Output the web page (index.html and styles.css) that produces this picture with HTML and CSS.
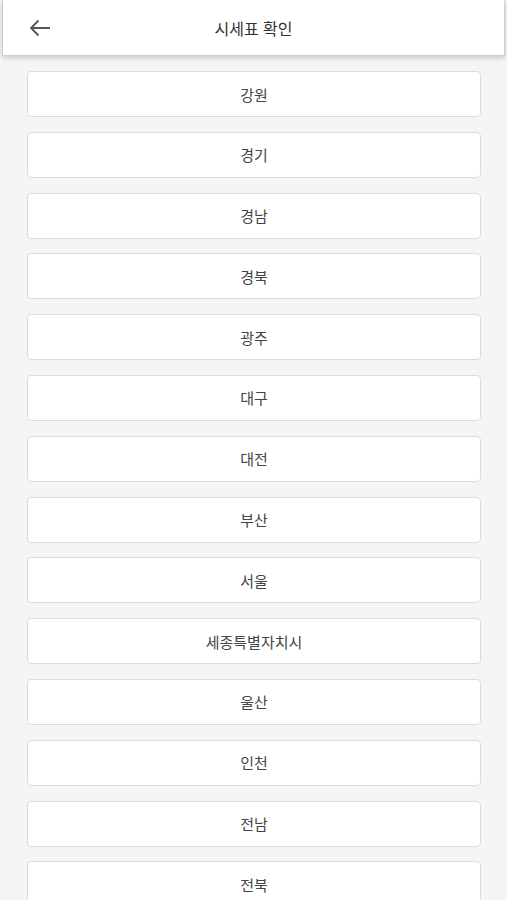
FILE: index.html
```html
<!DOCTYPE html>
<html lang="ko">
  <head>
    <meta charset="UTF-8" />
    <title>시세표 확인</title>
    <link rel="stylesheet" href="styles.css">
  </head>
  <body>
    <div class="header">
      <span class="back">
        <svg width="22" height="18" viewBox="0 0 22 18">
          <path d="M21 9H2M9.5 1.5L2 9l7.5 7.5" fill="none" stroke="#555" stroke-width="1.8" />
        </svg>
      </span>
      <div class="title">시세표 확인</div>
    </div>
    <div class="list">
      <div class="item">강원</div>
      <div class="item">경기</div>
      <div class="item">경남</div>
      <div class="item">경북</div>
      <div class="item">광주</div>
      <div class="item">대구</div>
      <div class="item">대전</div>
      <div class="item">부산</div>
      <div class="item">서울</div>
      <div class="item">세종특별자치시</div>
      <div class="item">울산</div>
      <div class="item">인천</div>
      <div class="item">전남</div>
      <div class="item">전북</div>
    </div>
  </body>
</html>
```

FILE: styles.css
```css
html,
body {
  margin: 0;
  height: 100%;
  overflow: hidden;
}
body {
  background-color: #f5f5f5;
  font-family: "Noto Sans CJK KR", "Noto Sans", sans-serif;
  color: #444;
}

.header {
  margin: 0 2px;
  height: 55px;
  background-color: #fff;
  border: 1px solid #cfcfcf;
  border-top: none;
  box-shadow: 0 2px 5px rgba(0, 0, 0, 0.18);
  display: flex;
  align-items: center;
  justify-content: center;
  position: relative;
}
.back {
  position: absolute;
  left: 26px;
  top: 19px;
  display: flex;
}
.title {
  font-size: 16px;
  color: #333;
}

.list {
  padding: 15px 26px 0 27px;
  display: flex;
  flex-direction: column;
  gap: 14.8px;
}
.item {
  height: 44px;
  flex-shrink: 0;
  background-color: #fff;
  border: 1px solid #dcdcdc;
  border-radius: 4px;
  display: flex;
  align-items: center;
  justify-content: center;
  font-size: 15px;
}
```
